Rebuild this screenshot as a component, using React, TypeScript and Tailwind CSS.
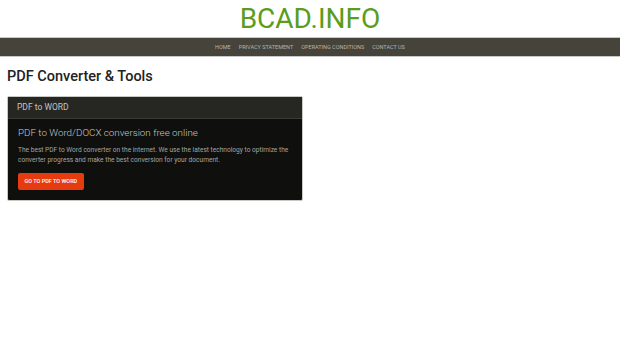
import React from 'react';

const navItems = ['Home', 'Privacy Statement', 'Operating Conditions', 'Contact Us'];

export default function App() {
  return (
    <div className="min-h-[343px] w-full bg-white font-['Roboto',sans-serif]">
      <header className="flex h-[37px] items-center justify-center">
        <h1 className="text-[28px] leading-none text-[#5a9c1c]">BCAD.INFO</h1>
      </header>
      <nav className="flex h-[20px] items-center justify-center gap-[8px] border-y border-[#c8c8c8] bg-[#46433b]">
        {navItems.map((item) => (
          <a key={item} href="#" className="text-[5.5px] uppercase text-[#b5b3ad]">
            {item}
          </a>
        ))}
      </nav>
      <main className="px-[7px]">
        <h2 className="mt-[11px] text-[14.5px] font-medium leading-[17px] text-[#222]">PDF Converter &amp; Tools</h2>
        <section className="mt-[11px] w-[296px] overflow-hidden rounded-[2px] border border-[#c9c9c4] bg-[#0f0f0d]">
          <div className="flex h-[22px] items-center border-b border-[#3a3a36] bg-[#262623] px-[9px] text-[8.5px] text-[#c4c4c0]">
            PDF to WORD
          </div>
          <div className="pl-[10px] pr-[4px] pt-[7px] pb-[10px]">
            <h3 className="text-[9.8px] font-light leading-[14px] text-[#c8c8c4]">PDF to Word/DOCX conversion free online</h3>
            <p className="mt-[5px] text-[6.6px] leading-[10px] text-[#a6a5a0]">
              <span className="whitespace-nowrap">
                The best PDF to Word converter on the internet. We use the latest technology to optimize the
              </span>
              <br />
              converter progress and make the best conversion for your document.
            </p>
            <button className="mt-[8px] flex h-[17px] items-center rounded-[2px] bg-[#e63a0f] px-[6.5px] text-[5.5px] font-medium uppercase text-white">
              Go to PDF to Word
            </button>
          </div>
        </section>
      </main>
    </div>
  );
}
